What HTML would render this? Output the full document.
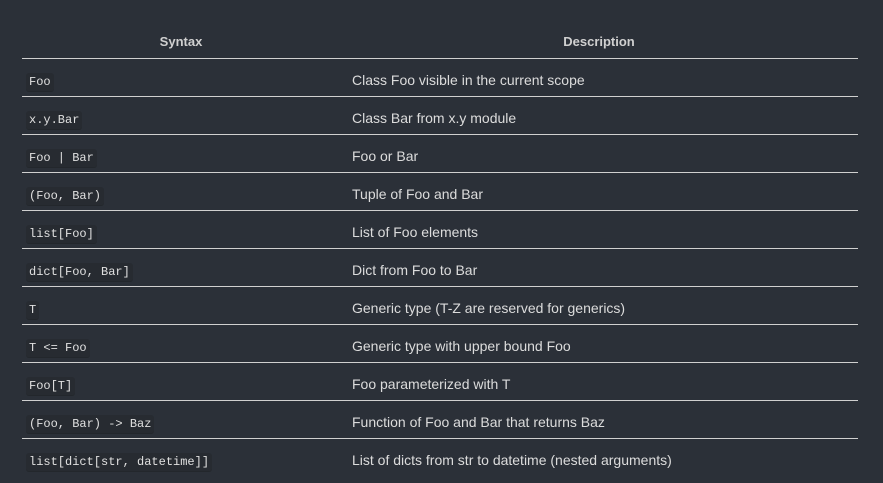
<!DOCTYPE html><html><head><style>
body{margin:0;background:#2b3038;width:883px;height:483px;overflow:hidden;font-family:"Liberation Sans",sans-serif;}
table{position:absolute;left:22px;top:20px;width:836px;border-collapse:collapse;}
th{color:#d0d0d0;font-weight:bold;font-size:13px;text-align:center;border-bottom:1px solid #d0d0d0;padding:6px 0 0 0;box-sizing:border-box;height:38px}
td{height:38px;box-sizing:border-box;border-bottom:1px solid #d0d0d0;padding:6px 0 0 4px;color:#dcdcdc;font-size:14px;vertical-align:middle}
tr:last-child td{border-bottom:none}
td:nth-child(2){padding-left:12px}
code{font-family:"Liberation Mono",monospace;font-size:12px;color:#e0e0e0;background:#272b31;padding:2px 3px;border-radius:3px;box-shadow:0 1px 0 #23272c}
</style></head><body>
<table>
<tr><th style="width:318px">Syntax</th><th>Description</th></tr>
<tr><td><code>Foo</code></td><td>Class Foo visible in the current scope</td></tr>
<tr><td><code>x.y.Bar</code></td><td>Class Bar from x.y module</td></tr>
<tr><td><code>Foo | Bar</code></td><td>Foo or Bar</td></tr>
<tr><td><code>(Foo, Bar)</code></td><td>Tuple of Foo and Bar</td></tr>
<tr><td><code>list[Foo]</code></td><td>List of Foo elements</td></tr>
<tr><td><code>dict[Foo, Bar]</code></td><td>Dict from Foo to Bar</td></tr>
<tr><td><code>T</code></td><td>Generic type (T-Z are reserved for generics)</td></tr>
<tr><td><code>T &lt;= Foo</code></td><td>Generic type with upper bound Foo</td></tr>
<tr><td><code>Foo[T]</code></td><td>Foo parameterized with T</td></tr>
<tr><td><code>(Foo, Bar) -&gt; Baz</code></td><td>Function of Foo and Bar that returns Baz</td></tr>
<tr><td><code>list[dict[str, datetime]]</code></td><td>List of dicts from str to datetime (nested arguments)</td></tr>
</table>
</body></html>
